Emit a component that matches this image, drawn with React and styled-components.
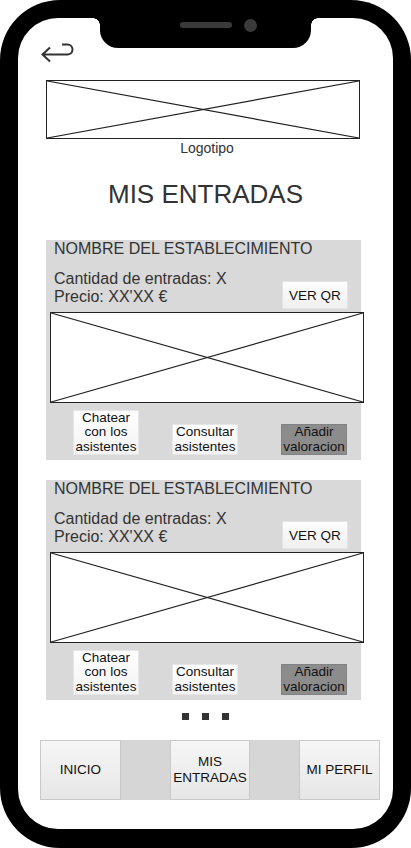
import React from "react"
import styled, { createGlobalStyle } from "styled-components"

const Global = createGlobalStyle`
  body {
    margin: 0;
    background: #fff;
    font-family: "Liberation Sans", Arial, sans-serif;
  }
`

const Phone = styled.div`
  position: relative;
  width: 411px;
  height: 848px;
  box-sizing: border-box;
  padding: 18px 18px 19px;
  background: #000;
  border-radius: 60px;
`

const Notch = styled.div`
  position: absolute;
  left: 100px;
  top: 0;
  width: 211px;
  height: 48px;
  background: #000;
  border-radius: 0 0 18px 18px;
  &::before,
  &::after {
    content: "";
    position: absolute;
    top: 18px;
    width: 7px;
    height: 7px;
  }
  &::before {
    left: -7px;
    background: radial-gradient(circle at 0 100%, transparent 6.5px, #000 7px);
  }
  &::after {
    right: -7px;
    background: radial-gradient(circle at 100% 100%, transparent 6.5px, #000 7px);
  }
`

const Speaker = styled.div`
  position: absolute;
  left: 80px;
  top: 22px;
  width: 52px;
  height: 6px;
  border-radius: 3px;
  background: #3a3a3a;
`

const Camera = styled.div`
  position: absolute;
  left: 144px;
  top: 19px;
  width: 13px;
  height: 13px;
  border-radius: 50%;
  background: #3a3a3a;
`

const Screen = styled.div`
  width: 375px;
  height: 811px;
  background: #fff;
  border-radius: 40px;
  overflow: hidden;
  display: flex;
  flex-direction: column;
  align-items: flex-start;
  box-sizing: border-box;
  padding-top: 24px;
  color: #333;
`

const BackButton = styled.svg`
  margin-left: 22px;
  display: block;
`

const LogoBox = styled.div`
  margin-left: 28px;
  margin-top: 16px;
  width: 314px;
  height: 59px;
  box-sizing: border-box;
  border: 1px solid #222;
  background: #fff;
`

const Cross = styled.svg`
  display: block;
  width: 100%;
  height: 100%;
`

const Caption = styled.div`
  align-self: stretch;
  text-align: center;
  font-size: 14px;
  line-height: 16px;
  margin-top: 1px;
  margin-left: 3px;
`

const Title = styled.h1`
  align-self: stretch;
  margin: 23px 0 0;
  text-align: center;
  font-size: 26px;
  line-height: 30px;
  font-weight: 400;
  color: #333;
`

const Card = styled.section`
  margin-left: 28px;
  margin-top: ${p => p.$top}px;
  width: 315px;
  height: 220px;
  background: #d9d9d9;
  display: flex;
  flex-direction: column;
`

const CardName = styled.div`
  padding-left: 8px;
  font-size: 16px;
  line-height: 18px;
`

const InfoRow = styled.div`
  margin-top: 12px;
  height: 39px;
  padding: 0 13px 0 8px;
  display: flex;
  justify-content: space-between;
  align-items: flex-start;
`

const InfoText = styled.div`
  font-size: 16px;
  line-height: 18px;
`

const QrButton = styled.div`
  align-self: flex-end;
  width: 66px;
  height: 28px;
  box-sizing: border-box;
  display: flex;
  align-items: center;
  justify-content: center;
  font-size: 13.5px;
  color: #111;
  background: linear-gradient(#fdfdfd, #f0f0f0);
  border: 1px solid #e4e4e4;
`

const Picture = styled.div`
  margin: 3px 0 0 4px;
  width: 314px;
  height: 91px;
  flex-shrink: 0;
  box-sizing: border-box;
  border: 1px solid #222;
  background: #fff;
`

const Actions = styled.div`
  flex: 1;
  display: flex;
  align-items: flex-end;
  padding: 0 0 5px 27px;
`

const Action = styled.div`
  margin-left: ${p => p.$gap || 0}px;
  width: 66px;
  box-sizing: border-box;
  text-align: center;
  font-size: 13.5px;
  line-height: 14.5px;
  color: #111;
  background: ${p => (p.$dark ? "#8c8c8c" : "linear-gradient(#fefefe, #f3f3f3)")};
  border: 1px solid ${p => (p.$dark ? "#828282" : "#e6e6e6")};
`

const Dots = styled.div`
  align-self: stretch;
  margin-top: 13px;
  display: flex;
  justify-content: center;
  gap: 13px;
`

const Dot = styled.span`
  width: 7px;
  height: 7px;
  background: #333;
`

const NavBar = styled.nav`
  margin: 20px 0 0 22px;
  width: 340px;
  height: 60px;
  box-sizing: border-box;
  background: #d6d6d6;
  display: flex;
  justify-content: space-between;
`

const NavButton = styled.div`
  width: ${p => p.$w}px;
  box-sizing: border-box;
  display: flex;
  align-items: center;
  justify-content: center;
  text-align: center;
  font-size: 13.5px;
  line-height: 16px;
  color: #111;
  background: linear-gradient(#f6f6f6, #e6e6e6);
  border: 1px solid #c9c9c9;
`

const CrossLines = () => (
  <Cross viewBox="0 0 100 100" preserveAspectRatio="none">
    <path d="M0 0 L100 100 M100 0 L0 100" stroke="#222" strokeWidth="1.2" vectorEffect="non-scaling-stroke" fill="none" />
  </Cross>
)

const TicketCard = ({ top }) => (
  <Card $top={top}>
    <CardName>NOMBRE DEL ESTABLECIMIENTO</CardName>
    <InfoRow>
      <InfoText>
        Cantidad de entradas: X
        <br />
        Precio: XX'XX €
      </InfoText>
      <QrButton>VER QR</QrButton>
    </InfoRow>
    <Picture>
      <CrossLines />
    </Picture>
    <Actions>
      <Action>
        Chatear
        <br />
        con los
        <br />
        asistentes
      </Action>
      <Action $gap={33}>
        Consultar
        <br />
        asistentes
      </Action>
      <Action $gap={43} $dark>
        Añadir
        <br />
        valoracion
      </Action>
    </Actions>
  </Card>
)

export default function App() {
  return (
    <>
      <Global />
      <Phone>
        <Notch>
          <Speaker />
          <Camera />
        </Notch>
        <Screen>
          <BackButton width="34" height="22" viewBox="0 0 34 22">
            <path
              d="M22 2.5 H27.5 A5 5 0 0 1 27.5 12.5 H2.5 M10 5.5 L2.5 12.5 L10 19.5"
              stroke="#333"
              strokeWidth="2"
              fill="none"
            />
          </BackButton>
          <LogoBox>
            <CrossLines />
          </LogoBox>
          <Caption>Logotipo</Caption>
          <Title>MIS ENTRADAS</Title>
          <TicketCard top={31} />
          <TicketCard top={20} />
          <Dots>
            <Dot />
            <Dot />
            <Dot />
          </Dots>
          <NavBar>
            <NavButton $w={81}>INICIO</NavButton>
            <NavButton $w={80}>
              MIS
              <br />
              ENTRADAS
            </NavButton>
            <NavButton $w={81}>MI PERFIL</NavButton>
          </NavBar>
        </Screen>
      </Phone>
    </>
  )
}
